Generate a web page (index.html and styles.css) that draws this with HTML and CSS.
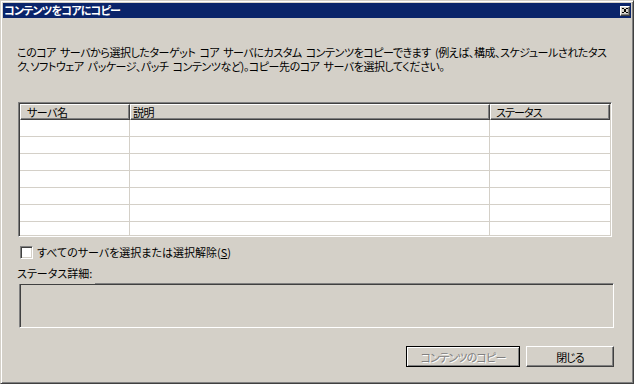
FILE: index.html
```html
<!DOCTYPE html>
<html lang="ja">
<head>
  <meta charset="UTF-8">
  <title>コンテンツをコアにコピー</title>
  <meta name="viewport" content="width=device-width, initial-scale=1.0">
  <link rel="stylesheet" href="styles.css">
</head>
<body>

  <div class="window">
    <!-- タイトルバー -->
    <div class="titlebar">
      <span class="title-text">コンテンツをコアにコピー</span>
      <div class="close-btn">
        <svg width="8" height="7" viewBox="0 0 8 7" shape-rendering="crispEdges">
          <path d="M0 0h2v1h1v1h2v-1h1v-1h2v1h-1v1h-1v1h-1v1h1v1h1v1h1v1h-2v-1h-1v-1h-2v1h-1v1h-2v-1h1v-1h1v-1h1v-1h-1v-1h-1v-1h-1z" fill="#000"/>
        </svg>
      </div>
    </div>

    <!-- 本体 -->
    <div class="content">
      <p class="desc">このコア サーバから選択したターゲット コア サーバにカスタム コンテンツをコピーできます (例えば、構成、スケジュールされたタス<br>ク、ソフトウェア パッケージ、パッチ コンテンツなど)。コピー先のコア サーバを選択してください。</p>

      <!-- サーバ一覧 -->
      <div class="listview">
        <div class="list-grid">
          <div class="head-cell col-name">サーバ名</div>
          <div class="head-cell col-desc">説明</div>
          <div class="head-cell col-status">ステータス</div>

          <div class="cell"></div><div class="cell"></div><div class="cell last"></div>
          <div class="cell"></div><div class="cell"></div><div class="cell last"></div>
          <div class="cell"></div><div class="cell"></div><div class="cell last"></div>
          <div class="cell"></div><div class="cell"></div><div class="cell last"></div>
          <div class="cell"></div><div class="cell"></div><div class="cell last"></div>
          <div class="cell"></div><div class="cell"></div><div class="cell last"></div>
          <div class="cell"></div><div class="cell"></div><div class="cell last"></div>
        </div>
      </div>

      <label class="check-row">
        <span class="checkbox"></span>
        <span class="check-label">すべてのサーバを選択または選択解除(<u>S</u>)</span>
      </label>

      <div class="status-label">ステータス詳細:</div>
      <div class="status-box"></div>

      <!-- ボタン -->
      <div class="buttons">
        <button class="btn btn-default" disabled>コンテンツのコピー</button>
        <button class="btn btn-close">閉じる</button>
      </div>
    </div>
  </div>

</body>
</html>
```

FILE: styles.css
```css
/* リセット */
* {
  margin: 0;
  padding: 0;
  box-sizing: border-box;
}

body {
  font-family: "Noto Sans CJK JP", "Noto Sans", sans-serif;
  font-size: 11px;
  letter-spacing: -0.5px;
  color: #000;
  background-color: #d4d0c8;
  font-feature-settings: "palt";
}

/* ウィンドウ枠 */
.window {
  width: 634px;
  height: 384px;
  display: flex;
  flex-direction: column;
  padding: 2px;
  background-color: #d4d0c8;
  border: 1px solid;
  border-color: #d4d0c8 #404040 #404040 #d4d0c8;
  box-shadow: inset 1px 1px #fff, inset -1px -1px #808080;
}

/* タイトルバー */
.titlebar {
  height: 15px;
  flex-shrink: 0;
  display: flex;
  align-items: center;
  justify-content: space-between;
  background-color: #0a246a;
  padding: 0 1px 0 1px;
}

.title-text {
  color: #fff;
  font-weight: bold;
  letter-spacing: -0.8px;
  line-height: 15px;
  white-space: nowrap;
}

.close-btn {
  width: 10px;
  height: 10px;
  display: flex;
  align-items: center;
  justify-content: center;
  background-color: #d4d0c8;
  border: 1px solid;
  border-color: #fff #404040 #404040 #fff;
  box-shadow: inset -1px -1px #808080;
}

.close-btn svg {
  width: 6px;
  height: 5px;
}

/* 本体 */
.content {
  flex: 1;
  display: flex;
  flex-direction: column;
  padding: 27px 17px 0 15px;
}

.desc {
  margin-left: -1px;
  line-height: 14px;
  letter-spacing: -0.45px;
  white-space: nowrap;
  word-spacing: 2px;
}

/* リストビュー */
.listview {
  margin-top: 29px;
  width: 594px;
  height: 135px;
  padding: 1px;
  overflow: hidden;
  background-color: #fff;
  border: 1px solid;
  border-color: #808080 #fff #fff #808080;
  box-shadow: inset 1px 1px #404040, inset -1px -1px #d4d0c8;
}

.list-grid {
  display: grid;
  grid-template-columns: 110px 360px 120px;
  grid-auto-rows: 17px;
  grid-template-rows: 16px;
}

.head-cell {
  height: 16px;
  line-height: 14px;
  background-color: #d4d0c8;
  border: 1px solid;
  border-color: #fff #404040 #404040 #fff;
  box-shadow: inset -1px -1px #808080;
  white-space: nowrap;
}

.col-name { padding-left: 6px; }
.col-desc { padding-left: 2px; }
.col-status {
  padding-left: 5px;
  letter-spacing: -0.9px;
}

.cell {
  border-bottom: 1px solid #d4d0c8;
  border-right: 1px solid #d4d0c8;
}

.cell.last {
  border-right: none;
}

/* チェックボックス */
.check-row {
  margin-top: 7px;
  height: 17px;
  display: flex;
  align-items: center;
  padding-left: 2px;
}

.checkbox {
  width: 13px;
  height: 13px;
  background-color: #fff;
  border: 1px solid;
  border-color: #808080 #fff #fff #808080;
  box-shadow: inset 1px 1px #404040, inset -1px -1px #d4d0c8;
}

.check-label {
  margin-left: 4px;
  line-height: 17px;
  letter-spacing: 0;
  white-space: nowrap;
}

/* ステータス詳細 */
.status-label {
  position: relative;
  z-index: 1;
  align-self: flex-start;
  margin-top: 3px;
  margin-left: -1px;
  padding: 0 3px 2px 0;
  line-height: 18px;
  letter-spacing: 0;
  background-color: #d4d0c8;
}

.status-box {
  margin-top: -1px;
  margin-left: 1px;
  width: 595px;
  height: 45px;
  background-color: #d4d0c8;
  border: 1px solid;
  border-color: #808080 #fff #fff #808080;
  box-shadow: inset 1px 1px #404040, inset -1px -1px #d4d0c8;
}

/* ボタン */
.buttons {
  margin-top: 18px;
  display: flex;
  justify-content: flex-end;
  gap: 6px;
}

.btn {
  height: 21px;
  font-family: inherit;
  font-size: 11px;
  font-feature-settings: "palt";
  background-color: #d4d0c8;
  color: #000;
  border: 1px solid;
  border-color: #fff #404040 #404040 #fff;
  box-shadow: inset -1px -1px #808080;
}

.btn-default {
  width: 114px;
  letter-spacing: -0.8px;
  border-color: #000;
  box-shadow: inset 1px 1px #fff, inset -1px -1px #808080;
  color: #808080;
  text-shadow: 1px 1px #fff;
}

.btn-close {
  width: 88px;
  letter-spacing: -1px;
}
```
